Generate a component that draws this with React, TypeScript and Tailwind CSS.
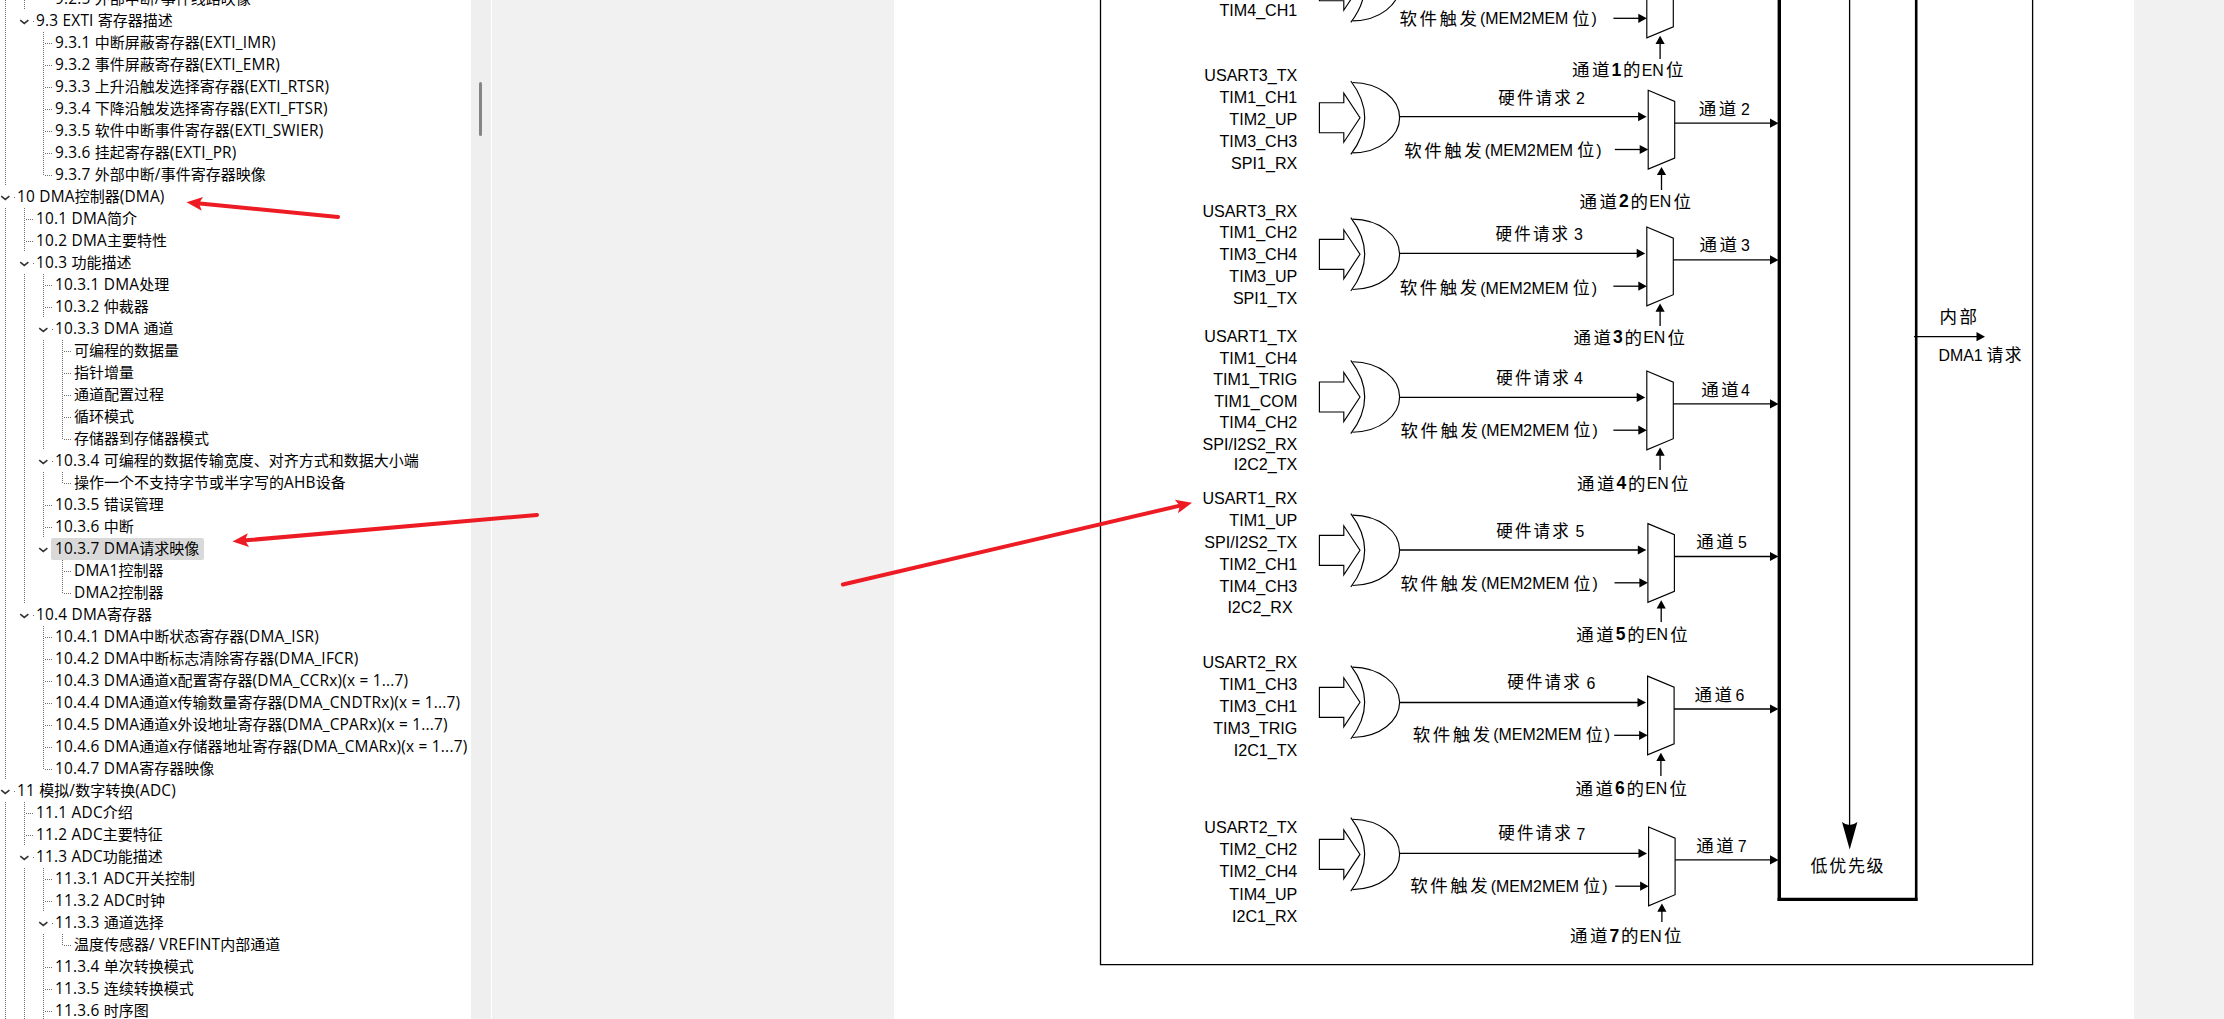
import React from "react";

type Item = { depth: number; text: string; open?: boolean; selected?: boolean };

const items: Item[] = [
  { depth: 2, text: "9.2.5 外部中断/事件线路映像" },
  { depth: 1, text: "9.3 EXTI 寄存器描述", open: true },
  { depth: 2, text: "9.3.1 中断屏蔽寄存器(EXTI_IMR)" },
  { depth: 2, text: "9.3.2 事件屏蔽寄存器(EXTI_EMR)" },
  { depth: 2, text: "9.3.3 上升沿触发选择寄存器(EXTI_RTSR)" },
  { depth: 2, text: "9.3.4 下降沿触发选择寄存器(EXTI_FTSR)" },
  { depth: 2, text: "9.3.5 软件中断事件寄存器(EXTI_SWIER)" },
  { depth: 2, text: "9.3.6 挂起寄存器(EXTI_PR)" },
  { depth: 2, text: "9.3.7 外部中断/事件寄存器映像" },
  { depth: 0, text: "10 DMA控制器(DMA)", open: true },
  { depth: 1, text: "10.1 DMA简介" },
  { depth: 1, text: "10.2 DMA主要特性" },
  { depth: 1, text: "10.3 功能描述", open: true },
  { depth: 2, text: "10.3.1 DMA处理" },
  { depth: 2, text: "10.3.2 仲裁器" },
  { depth: 2, text: "10.3.3 DMA 通道", open: true },
  { depth: 3, text: "可编程的数据量" },
  { depth: 3, text: "指针增量" },
  { depth: 3, text: "通道配置过程" },
  { depth: 3, text: "循环模式" },
  { depth: 3, text: "存储器到存储器模式" },
  { depth: 2, text: "10.3.4 可编程的数据传输宽度、对齐方式和数据大小端", open: true },
  { depth: 3, text: "操作一个不支持字节或半字写的AHB设备" },
  { depth: 2, text: "10.3.5 错误管理" },
  { depth: 2, text: "10.3.6 中断" },
  { depth: 2, text: "10.3.7 DMA请求映像", open: true, selected: true },
  { depth: 3, text: "DMA1控制器" },
  { depth: 3, text: "DMA2控制器" },
  { depth: 1, text: "10.4 DMA寄存器", open: true },
  { depth: 2, text: "10.4.1 DMA中断状态寄存器(DMA_ISR)" },
  { depth: 2, text: "10.4.2 DMA中断标志清除寄存器(DMA_IFCR)" },
  { depth: 2, text: "10.4.3 DMA通道x配置寄存器(DMA_CCRx)(x = 1...7)" },
  { depth: 2, text: "10.4.4 DMA通道x传输数量寄存器(DMA_CNDTRx)(x = 1...7)" },
  { depth: 2, text: "10.4.5 DMA通道x外设地址寄存器(DMA_CPARx)(x = 1...7)" },
  { depth: 2, text: "10.4.6 DMA通道x存储器地址寄存器(DMA_CMARx)(x = 1...7)" },
  { depth: 2, text: "10.4.7 DMA寄存器映像" },
  { depth: 0, text: "11 模拟/数字转换(ADC)", open: true },
  { depth: 1, text: "11.1 ADC介绍" },
  { depth: 1, text: "11.2 ADC主要特征" },
  { depth: 1, text: "11.3 ADC功能描述", open: true },
  { depth: 2, text: "11.3.1 ADC开关控制" },
  { depth: 2, text: "11.3.2 ADC时钟" },
  { depth: 2, text: "11.3.3 通道选择", open: true },
  { depth: 3, text: "温度传感器/ VREFINT内部通道" },
  { depth: 2, text: "11.3.4 单次转换模式" },
  { depth: 2, text: "11.3.5 连续转换模式" },
  { depth: 2, text: "11.3.6 时序图" },
];

/** True when another entry of the given depth follows under the same parent. */
function continues(index: number, depth: number): boolean {
  for (let i = index + 1; i < items.length; i++) {
    if (items[i].depth < depth) return false;
    if (items[i].depth === depth) return true;
  }
  return true;
}

function Guide({ show }: { show: boolean }) {
  return (
    <span className="flex h-[22px] w-[19px] shrink-0 pl-[5px]">
      {show && (
        <span className="h-full w-px bg-[repeating-linear-gradient(to_bottom,#6e6e6e_0_1px,transparent_1px_2px)]" />
      )}
    </span>
  );
}

function Marker({ open, last }: { open?: boolean; last: boolean }) {
  if (open) {
    return (
      <span className="flex h-[22px] w-[13px] shrink-0 items-center">
        <svg width="11" height="6" viewBox="0 0 11 6" className="mt-px shrink-0">
          <path d="M1.2 1.2 L5.3 4.4 L9.4 1.2" fill="none" stroke="#333" strokeWidth="1.6" />
        </svg>
        <span className="ml-[3px] mt-px size-px shrink-0 bg-[#6e6e6e]" />
      </span>
    );
  }
  return (
    <span className="flex h-[22px] w-[13px] shrink-0 pl-[5px]">
      <span
        className={
          "w-px shrink-0 bg-[repeating-linear-gradient(to_bottom,#6e6e6e_0_1px,transparent_1px_2px)] " +
          (last ? "h-[12px]" : "h-full")
        }
      />
      <span className="ml-px mt-[11px] h-px w-[8px] shrink-0 bg-[repeating-linear-gradient(to_right,#6e6e6e_0_1px,transparent_1px_2px)]" />
    </span>
  );
}

function Label({ text }: { text: string }) {
  return (
    <>
      {text.split(/([\x20-\x7e]+)/).map((part, i) =>
        i % 2 ? (
          <span key={i} className="font-['Open_Sans'] text-[15.4px] tracking-[0.22px] [font-kerning:none]">
            {part}
          </span>
        ) : (
          part
        ),
      )}
    </>
  );
}

function Outline() {
  return (
    <aside className="h-full w-[471px] shrink-0 overflow-hidden bg-white font-['Noto_Sans_CJK_SC',sans-serif] text-[15px] leading-[22px] text-black">
      <ul className="-mt-3">
        {items.map((item, i) => (
          <li key={i} className="flex h-[22px] whitespace-pre">
            {Array.from({ length: item.depth }, (_, d) => (
              <Guide key={d} show={continues(i, d)} />
            ))}
            <Marker open={item.open} last={!continues(i, item.depth)} />
            <span
              className={
                "h-[22px] rounded-[2px] pl-1 pr-[5px] " +
                (item.selected ? "bg-[#d9d9d9]" : "")
              }
            >
              <span className="-mt-px block h-[22px] leading-[22px]">
                <Label text={item.text} />
              </span>
            </span>
          </li>
        ))}
      </ul>
    </aside>
  );
}

type Channel = {
  n: number;
  gate: number;
  hw: number;
  mux: number;
  labels: [string, number, number?][];
  hwText: [number, number, number];
  swText: [number, number];
  chText: [number, number, number];
  enText: [number, number];
  enBase: number;
};

const channels: Channel[] = [
  {
    n: 1, gate: -14.3, hw: -14.5, mux: 1646.8,
    labels: [["TIM4_CH1", 10.3]],
    hwText: [1497, 1575, -34], swText: [1400, 18.7], chText: [1700, 1742, -22], enText: [1572.5, 70], enBase: 59,
  },
  {
    n: 2, gate: 117.7, hw: 116.7, mux: 1648.2,
    labels: [["USART3_TX", 75.7], ["TIM1_CH1", 97.7], ["TIM2_UP", 119.7], ["TIM3_CH3", 141.3], ["SPI1_RX", 163.7]],
    hwText: [1498.7, 1576, 98], swText: [1404.7, 150.3], chText: [1699.3, 1741.5, 108.7], enText: [1580, 201.3], enBase: 190,
  },
  {
    n: 3, gate: 254.3, hw: 253.4, mux: 1646.8,
    labels: [["USART3_RX", 211.7], ["TIM1_CH2", 232.7], ["TIM3_CH4", 254.3], ["TIM3_UP", 276.3], ["SPI1_TX", 298.3]],
    hwText: [1496, 1574, 234], swText: [1400.3, 288], chText: [1700, 1741.5, 245], enText: [1574, 337.3], enBase: 326,
  },
  {
    n: 4, gate: 397, hw: 397.4, mux: 1646.8,
    labels: [["USART1_TX", 336.3], ["TIM1_CH4", 358], ["TIM1_TRIG", 379.7], ["TIM1_COM", 401], ["TIM4_CH2", 422.3], ["SPI/I2S2_RX", 444], ["I2C2_TX", 464.7]],
    hwText: [1496.7, 1574, 377.7], swText: [1401, 430.3], chText: [1701.8, 1741.5, 389.3], enText: [1577.5, 483.3], enBase: 470,
  },
  {
    n: 5, gate: 550.3, hw: 550, mux: 1647.9,
    labels: [["USART1_RX", 498.7], ["TIM1_UP", 520.7], ["SPI/I2S2_TX", 542.3], ["TIM2_CH1", 564.3], ["TIM4_CH3", 586.3], ["I2C2_RX", 607.3, 1292.7]],
    hwText: [1496.7, 1575.4, 530.7], swText: [1401, 583.7], chText: [1696.8, 1738.5, 541.3], enText: [1576.8, 634.3], enBase: 622,
  },
  {
    n: 6, gate: 702.3, hw: 702.5, mux: 1647.6,
    labels: [["USART2_RX", 662.3], ["TIM1_CH3", 684.3], ["TIM3_CH1", 706.3], ["TIM3_TRIG", 728.3], ["I2C1_TX", 750.7]],
    hwText: [1507.7, 1586.4, 682.3], swText: [1413.3, 734.7], chText: [1695, 1736, 694.3], enText: [1576, 788.3], enBase: 776,
  },
  {
    n: 7, gate: 854.4, hw: 853.4, mux: 1648.6,
    labels: [["USART2_TX", 827.7], ["TIM2_CH2", 849.7], ["TIM2_CH4", 871.7], ["TIM4_UP", 894], ["I2C1_RX", 916.3]],
    hwText: [1498.7, 1576.4, 833.3], swText: [1410.7, 886], chText: [1696.8, 1738.3, 845.7], enText: [1570.4, 936], enBase: 922,
  },
];

/** Chinese text whose ideographs sit at a fixed pitch; y is the middle of the line. */
function Han({ x, y, pitch = 20, size = 17.5, children }: { x: number; y: number; pitch?: number; size?: number; children: string }) {
  return (
    <text
      x={children.split("").map((_, i) => x - 0.5 + i * pitch).join(" ")}
      y={y + size * 0.38 - 0.4}
      fontSize={size}
      className="font-['Noto_Sans_CJK_SC',sans-serif]"
    >
      {children}
    </text>
  );
}

function Latin({ x, y, bold, end, children }: { x: number; y: number; bold?: boolean; end?: boolean; children: React.ReactNode }) {
  return (
    <text
      x={x}
      y={y + 5.7}
      fontSize={bold ? 17.5 : end ? 16.1 : 15.9}
      textAnchor={end ? "end" : "start"}
      className={"font-['Liberation_Sans',sans-serif] [font-kerning:none] " + (bold ? "font-bold" : "")}
    >
      {children}
    </text>
  );
}

function ArrowRight({ x1, x2, y }: { x1: number; x2: number; y: number }) {
  return (
    <>
      <line x1={x1} x2={x2 - 6} y1={y} y2={y} stroke="#000" strokeWidth="1.3" />
      <polygon points={`${x2},${y} ${x2 - 8.5},${y - 4.6} ${x2 - 8.5},${y + 4.6}`} />
    </>
  );
}

function ChannelRow({ c }: { c: Channel }) {
  const g = c.gate;
  const m = c.mux;
  const h = c.hw;
  const r = m + 26.5;
  const enX = m + 13.3;
  return (
    <g>
      {c.labels.map(([t, y, x]) => (
        <Latin key={t} x={x ?? 1297.3} y={y} end>
          {t}
        </Latin>
      ))}
      <g fill="none" stroke="#000" strokeWidth="1.15">
        <path d={`M1319.4 ${g - 15} H1343.8 V${g - 24.5} L1360 ${g} L1343.8 ${g + 24.5} V${g + 15} H1319.4 Z`} />
        <path d={`M1350.8 ${g - 36.7} Q1378.6 ${g} 1350.8 ${g + 36.7}`} />
        <path d={`M1352.5 ${g - 35.2} C1380 ${g - 34.8} 1399.6 ${g - 18.5} 1399.6 ${g} C1399.6 ${g + 18.5} 1380 ${g + 34.8} 1352.5 ${g + 35.2}`} />
        <path d={`M${m} ${h - 26.4} L${r} ${h - 15.3} V${h + 41.3} L${m} ${h + 52.4} Z`} />
      </g>
      <ArrowRight x1={1399.6} x2={m - 1.6} y={h} />
      <ArrowRight x1={m - 33.4} x2={m} y={h + 32.8} />
      <ArrowRight x1={r} x2={1778.5} y={h + 6.5} />
      <line x1={enX} x2={enX} y1={h + 56} y2={c.enBase} stroke="#000" strokeWidth="1.3" />
      <polygon points={`${enX},${h + 50.2} ${enX - 4.6},${h + 58.4} ${enX + 4.6},${h + 58.4}`} />

      {c.hwText[2] > 0 && (
        <>
          <Han x={c.hwText[0]} y={c.hwText[2]} pitch={18.7} size={16.5}>硬件请求</Han>
          <Latin x={c.hwText[1]} y={c.hwText[2] + 0.5}>{c.n}</Latin>
        </>
      )}

      <Han x={c.swText[0]} y={c.swText[1]}>软件触发</Han>
      <Latin x={c.swText[0] + 80} y={c.swText[1]}>(MEM2MEM</Latin>
      <Han x={c.swText[0] + 173} y={c.swText[1]} size={17}>位</Han>
      <Latin x={c.swText[0] + 191.5} y={c.swText[1]}>)</Latin>

      {c.chText[2] > 0 && (
        <>
          <Han x={c.chText[0]} y={c.chText[2]}>通道</Han>
          <Latin x={c.chText[1] - 0.5} y={c.chText[2] + 0.5}>{c.n}</Latin>
        </>
      )}

      <Han x={c.enText[0]} y={c.enText[1]}>通道</Han>
      <Latin x={c.enText[0] + 39} y={c.enText[1]} bold>{c.n}</Latin>
      <Han x={c.enText[0] + 51} y={c.enText[1]}>的</Han>
      <Latin x={c.enText[0] + 69.2} y={c.enText[1]}>EN</Latin>
      <Han x={c.enText[0] + 94} y={c.enText[1]}>位</Han>
    </g>
  );
}

function Diagram() {
  return (
    <svg width="1240" height="1019" viewBox="894 0 1240 1019" className="block">
      <path d="M1100.5 -5 V964.6 H2032.6 V-5" fill="none" stroke="#000" strokeWidth="1.3" />
      {channels.map((c) => (
        <ChannelRow key={c.n} c={c} />
      ))}
      <line x1="1779.3" x2="1779.3" y1="-5" y2="901" stroke="#000" strokeWidth="3.4" />
      <line x1="1916.2" x2="1916.2" y1="-5" y2="901" stroke="#000" strokeWidth="2.6" />
      <line x1="1777.6" x2="1917.5" y1="899.4" y2="899.4" stroke="#000" strokeWidth="3.2" />
      <line x1="1849.6" x2="1849.6" y1="-5" y2="826" stroke="#000" strokeWidth="1.3" />
      <path d="M1842 822 Q1849.6 828 1857.4 822 L1849.7 849.5 Z" />
      <Han x={1811} y={866.3} pitch={18.7} size={17}>低优先级</Han>
      <ArrowRight x1={1914} x2={1985} y={336.7} />
      <Han x={1940} y={316.7} size={17.5}>内部</Han>
      <Latin x={1938.5} y={355.3}>DMA1</Latin>
      <Han x={1987} y={355.3} pitch={18.2} size={16.8}>请求</Han>
    </svg>
  );
}

function RedArrow({ tip, tail }: { tip: [number, number]; tail: [number, number] }) {
  const dx = tail[0] - tip[0];
  const dy = tail[1] - tip[1];
  const len = Math.hypot(dx, dy);
  const angle = (Math.atan2(dy, dx) * 180) / Math.PI;
  return (
    <g transform={`translate(${tip[0]} ${tip[1]}) rotate(${angle})`} fill="#ed1c24">
      <path d={`M0 0 L16 -7 L13.5 -2 L${len - 2} -2 A2 2 0 0 1 ${len - 2} 2 L13.5 2 L16 7 Z`} />
    </g>
  );
}

export default function App() {
  return (
    <div className="relative flex h-[1019px] w-[2224px] overflow-hidden bg-[#f1f1f1]">
      <Outline />
      <div className="flex w-5 shrink-0 flex-col bg-[#efefef] pl-2 pt-[82px]">
        <div className="h-[54px] w-[3px] rounded-full bg-[#858585]" />
      </div>
      <div className="w-px shrink-0 bg-white" />
      <main className="flex flex-1 bg-[#f1f1f1] pl-[402px]">
        <div className="h-full w-[1240px] shrink-0 bg-white">
          <Diagram />
        </div>
      </main>
      <svg width="2224" height="1019" className="pointer-events-none absolute inset-0">
        <RedArrow tip={[186.5, 202.3]} tail={[340, 217.2]} />
        <RedArrow tip={[232.5, 541.5]} tail={[539, 514.8]} />
        <RedArrow tip={[1192, 502.8]} tail={[841, 585]} />
      </svg>
    </div>
  );
}
